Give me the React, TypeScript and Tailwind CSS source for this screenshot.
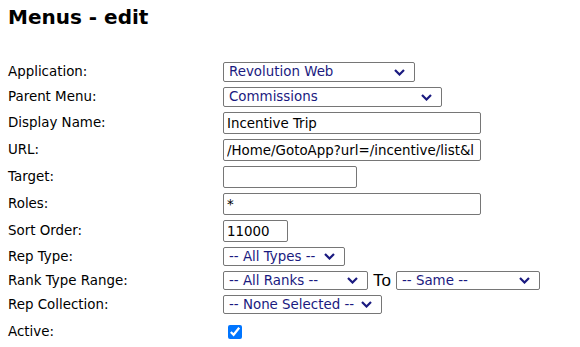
import React from 'react';

const labelCls = 'w-[215px] shrink-0 text-[13.4px] leading-[16px] text-black';

function Chevron() {
  return (
    <svg width="11" height="7" viewBox="0 0 11 7" className="shrink-0">
      <path d="M1 1l4.5 4.5L10 1" fill="none" stroke="#1a1a80" strokeWidth="2.2" />
    </svg>
  );
}

function FakeSelect({ value, width, height = 'h-[19px]' }: { value: string; width: string; height?: string }) {
  return (
    <div
      className={`${width} ${height} flex items-center justify-between border border-[#767676] rounded-[2px] bg-white pl-[5px] pr-[9px] text-[13.4px] leading-[16px] text-[#1a1a80]`}
    >
      <span className="whitespace-nowrap">{value}</span>
      <Chevron />
    </div>
  );
}

function TextBox({ value, width }: { value: string; width: string }) {
  return (
    <input
      type="text"
      defaultValue={value}
      className={`${width} h-[22px] border border-[#767676] rounded-[2px] bg-white px-[3px] text-[13.4px] text-black outline-none`}
      style={{ fontFamily: 'inherit' }}
    />
  );
}

function Row({ label, children }: { label: string; children: React.ReactNode }) {
  return (
    <div className="flex items-center">
      <div className={labelCls}>{label}</div>
      {children}
    </div>
  );
}

export default function App() {
  return (
    <div className="w-[580px] h-[347px] bg-white px-[8px] pt-[5px]" style={{ fontFamily: '"DejaVu Sans", Verdana, sans-serif' }}>
      <h1 className="text-[20px] font-bold text-black leading-[24px]">Menus - edit</h1>

      <div className="mt-[33px] flex flex-col gap-[5px]">
        <Row label="Application:">
          <FakeSelect value="Revolution Web" width="w-[192px]" height="h-[20px]" />
        </Row>
        <Row label="Parent Menu:">
          <FakeSelect value="Commissions" width="w-[219px]" height="h-[20px]" />
        </Row>
        <Row label="Display Name:">
          <TextBox value="Incentive Trip" width="w-[258px]" />
        </Row>
        <Row label="URL:">
          <TextBox value="/Home/GotoApp?url=/incentive/list&l" width="w-[258px]" />
        </Row>
        <Row label="Target:">
          <TextBox value="" width="w-[134px]" />
        </Row>
        <Row label="Roles:">
          <TextBox value="*" width="w-[258px]" />
        </Row>
        <Row label="Sort Order:">
          <TextBox value="11000" width="w-[65px]" />
        </Row>
        <Row label="Rep Type:">
          <FakeSelect value="-- All Types --" width="w-[122px]" />
        </Row>
        <Row label="Rank Type Range:">
          <FakeSelect value="-- All Ranks --" width="w-[145px]" />
          <span className="mx-[5px] text-[17px] leading-[19px] text-black" style={{ fontFamily: '"Liberation Sans", Arial, sans-serif' }}>
            To
          </span>
          <FakeSelect value="-- Same --" width="w-[144px]" />
        </Row>
        <Row label="Rep Collection:">
          <FakeSelect value="-- None Selected --" width="w-[159px]" />
        </Row>
        <div className="flex items-center mt-[5px]">
          <div className={labelCls}>Active:</div>
          <input type="checkbox" defaultChecked className="ml-[5px] w-[14px] h-[14px] accent-[#0075ff]" />
        </div>
      </div>
    </div>
  );
}
